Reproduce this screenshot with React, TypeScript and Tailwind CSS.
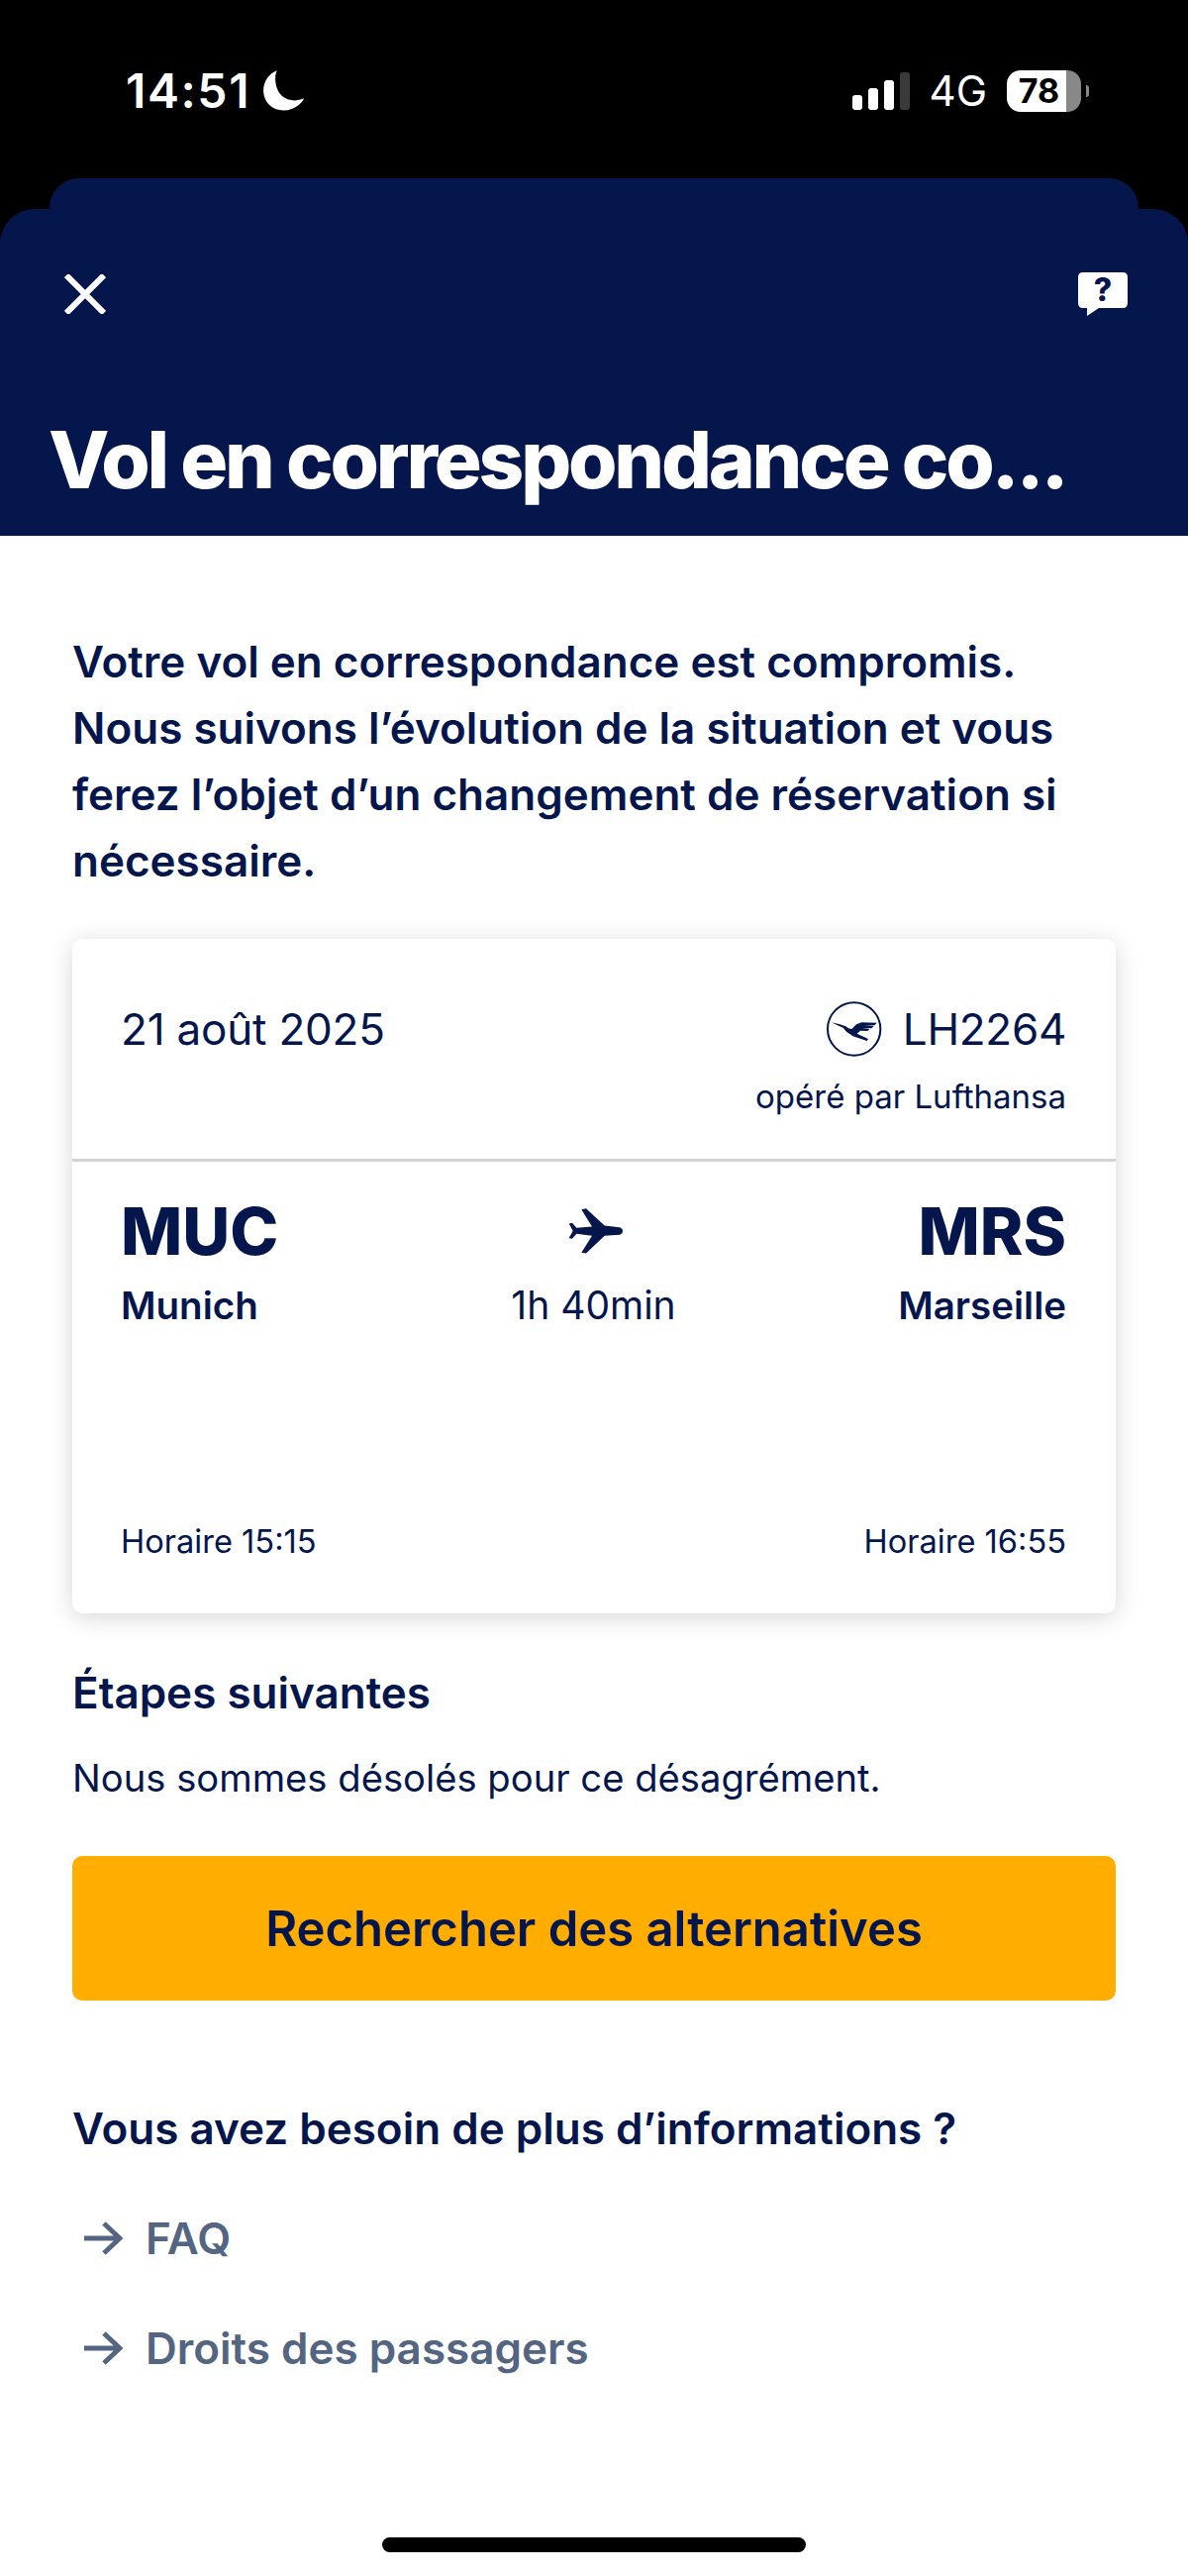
import React from "react";

const font = "font-['Inter','Liberation_Sans',sans-serif]";

const CraneLogo: React.FC = () => (
    <svg viewBox="100 48 168 168" className="h-[56px] w-[56px]">
        <circle cx="183" cy="132" r="80" fill="none" stroke="#05164d" strokeWidth="6" />
        <path
            fill="#05164d"
            d="M114 112 L140 118 L158 124 L166 130 L176 132 L190 118 L206 112 L252 113 L246 120 L212 121 L244 122 L236 130 L208 129 L230 132 L224 138 L202 137 L192 146 L226 162 L222 168 L180 154 L160 140 L150 128 L136 122 Z"
        />
    </svg>
);

const PlaneIcon: React.FC = () => (
    <svg viewBox="0 0 165 137" className="ml-[5px] h-[46px] w-[55px]">
        <path
            fill="#05164d"
            d="M40 3 L54 0 L110 52 L155 57 Q165 60 165 68 Q165 78 155 80 L110 83 L54 136 L40 134 L72 83 L25 77 L12 92 L2 90 L14 68 L2 46 L12 44 L25 59 L72 55 Z"
        />
    </svg>
);

const ArrowIcon: React.FC = () => (
    <svg viewBox="0 0 40 36" className="h-[36px] w-[40px]" fill="none" stroke="#546582" strokeWidth="5">
        <path d="M1 18 H37 M21 3 L37 18 L21 33" />
    </svg>
);

const App: React.FC = () => {
    return (
        <div className={`h-[2601px] w-[1200px] overflow-hidden bg-white text-[#05164d] ${font}`}>
            {/* Status bar */}
            <div className="h-[180px] bg-black pt-[68px] text-white">
                <div className="flex items-center justify-between pl-[127px] pr-[100px]">
                    <div className="flex items-center gap-[12px]">
                        <span className="text-[48px] leading-[48px] font-semibold tracking-[1.6px]">14:51</span>
                        <svg viewBox="0 0 40 40" className="h-[42px] w-[42px]">
                            <path fill="#fff" d="M14 0 C3 5 -2 17 3 28 C8 39 24 42 34 34 C37 32 39 30 40 27 C28 32 17 27 14 17 C12 11 12 5 14 0 Z" />
                        </svg>
                    </div>
                    <div className="flex items-center">
                        <div className="flex items-end gap-[6px]">
                            <div className="h-[15px] w-[10px] rounded-[3px] bg-white" />
                            <div className="h-[22px] w-[10px] rounded-[3px] bg-white" />
                            <div className="h-[30px] w-[10px] rounded-[3px] bg-white" />
                            <div className="h-[38px] w-[10px] rounded-[3px] bg-[#3a3a3a]" />
                        </div>
                        <span className="ml-[20px] text-[42px] leading-[42px] font-normal">4G</span>
                        <div className="ml-[20px] flex h-[42px] w-[75px] items-center justify-center rounded-[14px] bg-[linear-gradient(90deg,#fff_80%,#888_80%)] pr-[10px] text-[34px] leading-none font-bold text-black">
                            78
                        </div>
                        <div className="ml-[5px] h-[12px] w-[3px] rounded-r-full bg-[#888]" />
                    </div>
                </div>
            </div>

            {/* Sheet header */}
            <div className="bg-black">
                <div className="mx-[50px] h-[31px] rounded-t-[30px] bg-[#05164d]" />
                <div className="h-[330px] rounded-t-[35px] bg-[#05164d] text-white">
                    <div className="flex items-start justify-between pl-[65px] pr-[61px] pt-[66px]">
                        <svg viewBox="0 0 42 40" className="h-[40px] w-[42px]" fill="none" stroke="#fff" strokeWidth="6">
                            <path d="M2 1 L40 39 M40 1 L2 39" />
                        </svg>
                        <div className="relative -mt-[2px] h-[44px] w-[50px]">
                            <svg viewBox="0 0 50 44" className="h-[44px] w-[50px]">
                                <path fill="#fff" d="M5 0 H45 Q50 0 50 5 V31 Q50 36 45 36 H21 L9 44 V36 H5 Q0 36 0 31 V5 Q0 0 5 0 Z" />
                            </svg>
                            <span className="absolute left-0 top-0 w-[50px] text-center text-[32px] leading-[36px] font-extrabold text-[#05164d]">?</span>
                        </div>
                    </div>
                    <h1 className="mt-[100px] pl-[49px] text-[80px] leading-[90px] font-extrabold tracking-[-3.2px]">Vol en correspondance co...</h1>
                </div>
            </div>

            <main className="px-[73px]">
                <p className="mt-[94px] text-[44px] leading-[67px] font-semibold">
                    Votre vol en correspondance est compromis.
                    <br />
                    Nous suivons l’évolution de la situation et vous
                    <br />
                    ferez l’objet d’un changement de réservation si
                    <br />
                    nécessaire.
                </p>

                {/* Flight card */}
                <section className="mt-[45px] h-[681px] rounded-[10px] bg-white shadow-[0_4px_24px_rgba(0,0,0,0.16)]">
                    <div className="h-[222px] pl-[49px] pr-[50px] pt-[63px]">
                        <div className="flex items-center justify-between">
                            <span className="text-[44px] leading-[52px] tracking-[-0.2px]">21 août 2025</span>
                            <div className="flex items-center gap-[21px]">
                                <CraneLogo />
                                <span className="text-[44px] leading-[52px] tracking-[-0.3px]">LH2264</span>
                            </div>
                        </div>
                        <div className="mt-[20px] text-right text-[33px] leading-[40px]">opéré par Lufthansa</div>
                    </div>
                    <div className="h-[3px] bg-[#d4d4d8]" />
                    <div className="pl-[49px] pr-[50px] pt-[30px]">
                        <div className="grid grid-cols-3">
                            <div>
                                <div className="text-[66px] leading-[80px] font-extrabold">MUC</div>
                                <div className="mt-[11px] text-[38.5px] leading-[48px] font-semibold">Munich</div>
                            </div>
                            <div className="flex flex-col items-center">
                                <div className="flex h-[80px] items-center">
                                    <PlaneIcon />
                                </div>
                                <div className="mt-[11px] text-[39px] leading-[48px]">1h 40min</div>
                            </div>
                            <div className="text-right">
                                <div className="text-[66px] leading-[80px] font-extrabold">MRS</div>
                                <div className="mt-[11px] text-[38.5px] leading-[48px] font-semibold">Marseille</div>
                            </div>
                        </div>
                        <div className="mt-[194px] flex justify-between text-[32.6px] leading-[40px]">
                            <span>Horaire 15:15</span>
                            <span>Horaire 16:55</span>
                        </div>
                    </div>
                </section>

                <h2 className="mt-[55px] text-[44px] leading-[50px] font-semibold">Étapes suivantes</h2>
                <p className="mt-[36px] text-[38.2px] leading-[50px]">Nous sommes désolés pour ce désagrément.</p>

                <button type="button" className="mt-[54px] flex h-[146px] w-full items-center justify-center rounded-[10px] bg-[#ffad00] pt-[2px] text-[49px] font-semibold">
                    Rechercher des alternatives
                </button>

                <h2 className="mt-[104px] text-[44px] leading-[50px] font-semibold">Vous avez besoin de plus d’informations ?</h2>

                <div className="mt-[61px] flex flex-col gap-[61px] pl-[11px] text-[44px] leading-[50px] font-semibold text-[#546582]">
                    <a className="flex items-center gap-[23px]">
                        <ArrowIcon />
                        FAQ
                    </a>
                    <a className="flex items-center gap-[23px]">
                        <ArrowIcon />
                        Droits des passagers
                    </a>
                </div>
            </main>

            {/* Home indicator */}
            <div className="mt-[166px] flex justify-center">
                <div className="h-[15px] w-[428px] rounded-full bg-black" />
            </div>
        </div>
    );
};

export default App;
